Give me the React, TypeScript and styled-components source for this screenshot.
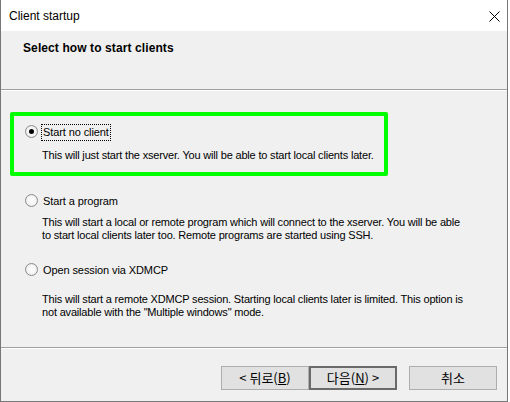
import React from 'react';
import styled, { createGlobalStyle } from 'styled-components';

const GlobalStyle = createGlobalStyle`
    html, body {
        margin: 0;
        padding: 0;
        background: #ffffff;
    }
    *, *::before, *::after {
        box-sizing: border-box;
    }
`

const options = [
    {
        label: 'Start no client',
        desc: ['This will just start the xserver. You will be able to start local clients later.'],
        gap: 8,
        selected: true,
    },
    {
        label: 'Start a program',
        desc: [
            'This will start a local or remote program which will connect to the xserver. You will be able',
            'to start local clients later too. Remote programs are started using SSH.',
        ],
        gap: 6,
        selected: false,
    },
    {
        label: 'Open session via XDMCP',
        desc: [
            'This will start a remote XDMCP session. Starting local clients later is limited. This option is',
            'not available with the "Multiple windows" mode.',
        ],
        gap: 14,
        selected: false,
    },
];

const App = () => {
    return (
        <>
            <GlobalStyle />
            <Window>
                <TitleBar>
                    <Title>Client startup</Title>
                    <CloseIcon width='11' height='11' viewBox='0 0 11 11'>
                        <path d='M0.5 0.5 L10.5 10.5 M10.5 0.5 L0.5 10.5' stroke='#000' strokeWidth='1' fill='none' />
                    </CloseIcon>
                </TitleBar>
                <Header>
                    <HeaderText>Select how to start clients</HeaderText>
                </Header>
                <Separator />
                <Content>
                    {options.map((o) => (
                        <Option key={o.label} $selected={o.selected}>
                            <OptionRow>
                                <Radio $checked={o.selected} />
                                <Label $focused={o.selected}>{o.label}</Label>
                            </OptionRow>
                            <Description $gap={o.gap}>
                                {o.desc.map((line) => (
                                    <div key={line}>{line}</div>
                                ))}
                            </Description>
                        </Option>
                    ))}
                </Content>
                <Separator />
                <Footer>
                    <Button>&lt; 뒤로(<u>B</u>)</Button>
                    <Button $default>다음(<u>N</u>) &gt;</Button>
                    <Button $spaced>취소</Button>
                </Footer>
            </Window>
        </>
    )
}

export default App;

const Window = styled.div`
    width: 508px;
    height: 402px;
    display: flex;
    flex-direction: column;
    background: #f0f0f0;
    border: 1px solid #777777;
    border-top: none;
    font-family: 'Liberation Sans', Arial, sans-serif;
    color: #000;
`

const TitleBar = styled.div`
    height: 31px;
    flex: none;
    display: flex;
    flex-direction: row;
    align-items: center;
    justify-content: space-between;
    background: #ffffff;
    padding: 0 7px 0 8px;
`

const Title = styled.span`
    font-size: 12px;
    line-height: 16px;
`

const CloseIcon = styled.svg`
    display: block;
    margin-top: 1px;
`

const Header = styled.div`
    height: 58px;
    flex: none;
    padding: 9px 0 0 22px;
`

const HeaderText = styled.div`
    font-size: 12px;
    font-weight: bold;
    line-height: 16px;
    letter-spacing: 0.1px;
`

const Separator = styled.div`
    height: 2px;
    flex: none;
    border-top: 1px solid #a0a0a0;
    border-bottom: 1px solid #ffffff;
`

const Content = styled.div`
    height: 256px;
    flex: none;
    padding: 33px 0 0 24px;
    display: flex;
    flex-direction: column;
`

const Option = styled.div<{ $selected?: boolean }>`
    position: relative;
    height: 69px;
    flex: none;

    &::before {
        content: '';
        display: ${p => p.$selected ? 'block' : 'none'};
        position: absolute;
        left: -15px;
        top: -12px;
        width: 378px;
        height: 64px;
        border: 4px solid #00ff00;
        border-radius: 2px;
        pointer-events: none;
    }
`

const OptionRow = styled.div`
    display: flex;
    flex-direction: row;
    align-items: flex-start;
    height: 17px;
`

const Radio = styled.span<{ $checked?: boolean }>`
    width: 13px;
    height: 13px;
    margin-top: 1px;
    margin-right: 3px;
    border-radius: 50%;
    border: 1px solid #8c8c8c;
    background: radial-gradient(circle at 50% 50%, #ffffff 0%, #f4f4f4 55%, #d6d6d6 100%);
    display: flex;
    align-items: center;
    justify-content: center;

    &::after {
        content: '';
        display: ${p => p.$checked ? 'block' : 'none'};
        width: 5px;
        height: 5px;
        border-radius: 50%;
        background: #000;
    }
`

const Label = styled.span<{ $focused?: boolean }>`
    font-size: 11px;
    line-height: 15px;
    padding: 0 1px;
    letter-spacing: -0.1px;
    border: 1px dotted ${p => p.$focused ? '#000' : 'transparent'};
    white-space: nowrap;
`

const Description = styled.div<{ $gap: number }>`
    margin: ${p => p.$gap}px 0 0 17px;
    font-size: 11px;
    line-height: 13px;
    letter-spacing: -0.18px;
    white-space: nowrap;
`

const Footer = styled.div`
    flex: 1;
    display: flex;
    flex-direction: row;
    justify-content: flex-end;
    align-items: flex-start;
    padding: 17px 10px 0 0;
`

const Button = styled.button<{ $default?: boolean; $spaced?: boolean }>`
    width: 88px;
    height: 24px;
    margin-left: ${p => p.$spaced ? 12 : 0}px;
    padding: 0;
    background: #e1e1e1;
    border: ${p => p.$default ? '2px solid #6a6a6a' : '1px solid #adadad'};
    font-family: 'Noto Sans CJK KR', 'Liberation Sans', sans-serif;
    font-size: 13px;
    line-height: 16px;
    color: #000;

    u {
        text-underline-offset: 1px;
    }
`
